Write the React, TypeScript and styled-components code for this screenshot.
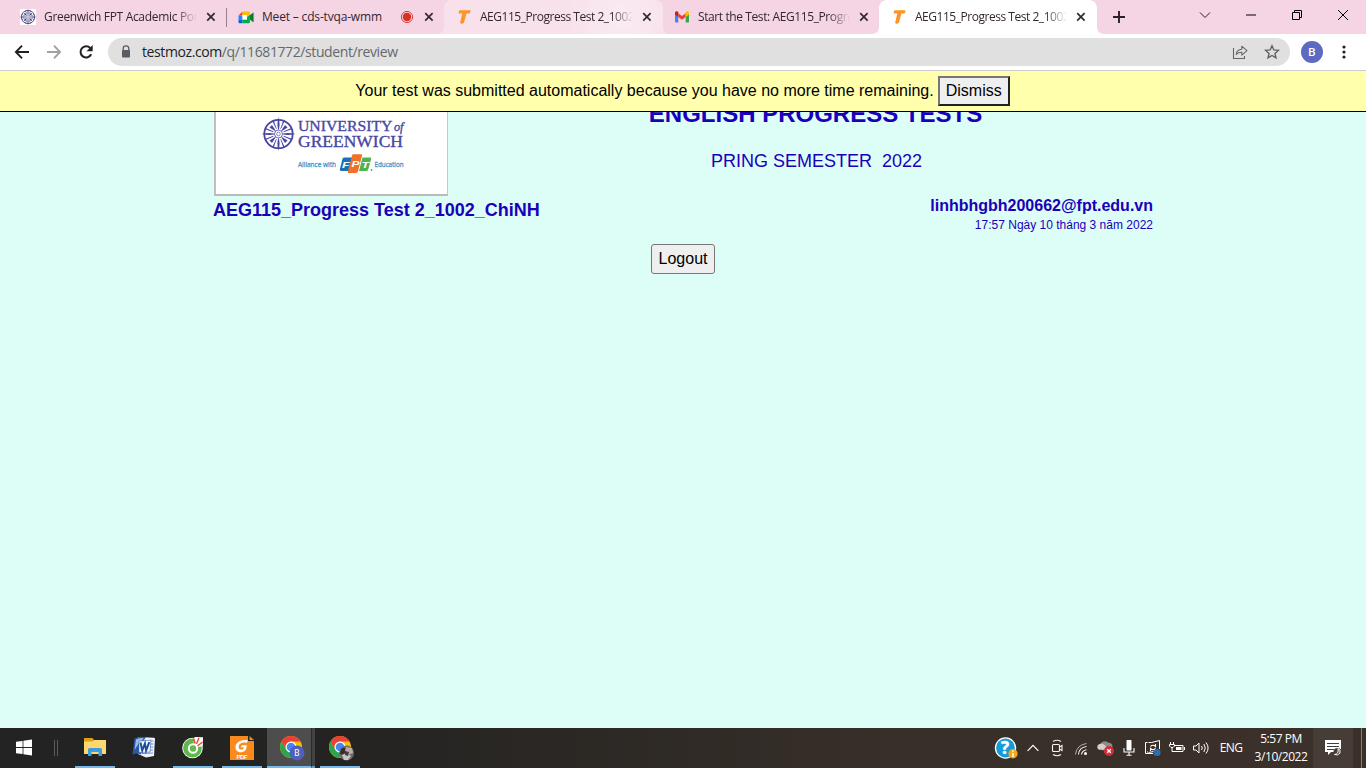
import React from 'react';
import styled, { createGlobalStyle, css } from 'styled-components';

const Global = createGlobalStyle`
  * { box-sizing: border-box; }
  html, body { margin: 0; padding: 0; }
  body { width: 1366px; height: 768px; overflow: hidden; background: #ddfdf7; }
  svg { display: block; flex: none; overflow: visible; }
`;

const ui = css`font-family: 'Open Sans', 'Noto Sans', sans-serif;`;

const Screen = styled.div`
  width: 1366px; height: 768px; display: flex; flex-direction: column; overflow: hidden;
`;

/* Tab strip */
const TabStrip = styled.div`
  ${ui}
  display: flex; height: 34px; background: #f5d4e3; flex: none;
`;
const TabBox = styled.div<{ $w: number; $pad: number; $kind?: 'hover' | 'active' }>`
  position: relative; display: flex; align-items: center; height: 34px; flex: none;
  width: ${p => p.$w}px; padding-left: ${p => p.$pad}px;
  border-radius: 8px 8px 0 0;
  background: ${p => p.$kind === 'active' ? '#fff' : p.$kind === 'hover' ? 'radial-gradient(circle at 178px 17px, #faebf2 0, #f8e1eb 55px)' : 'transparent'};
  ${p => p.$kind && css`
    &::before, &::after {
      content: ''; position: absolute; bottom: 0; width: 6px; height: 6px;
    }
    &::before { left: -6px; background: radial-gradient(circle at 0 0, transparent 5.5px, ${p.$kind === 'active' ? '#fff' : '#f8e1eb'} 6px); }
    &::after { right: -6px; background: radial-gradient(circle at 100% 0, transparent 5.5px, ${p.$kind === 'active' ? '#fff' : '#f8e1eb'} 6px); }
  `}
`;
const TabTitle = styled.span<{ $w: number; $ls: number; $fade?: boolean }>`
  width: ${p => p.$w}px; margin-left: 8px; font-size: 12px; line-height: 18px; height: 18px; color: #33282f;
  letter-spacing: ${p => p.$ls}px; white-space: pre; overflow: hidden; flex: none;
  ${p => p.$fade && css`mask-image: linear-gradient(to right, #000 calc(100% - 22px), transparent);`}
`;
const Recording = styled.span`
  margin-right: 1px;
`;
const CloseSlot = styled.span`
  margin-left: 9px; width: 10px; display: flex;
`;
const TabRule = styled.i`
  width: 1px; height: 19px; margin-top: 8px; background: #95808a; flex: none;
`;
const NewTab = styled.div`
  width: 44px; display: flex; align-items: center; justify-content: center;
`;
const WindowControls = styled.div`
  margin-left: auto; display: flex; height: 29px;
`;
const WindowButton = styled.div`
  width: 46px; display: flex; align-items: center; justify-content: center;
`;

/* Toolbar */
const Toolbar = styled.div`
  ${ui}
  display: flex; align-items: center; height: 37px; padding: 0 0 0 14px; background: #fff;
  border-bottom: 1px solid #cdcdcd; flex: none;
`;
const NavButton = styled.div`
  width: 16px; margin-right: 16px; display: flex; justify-content: center;
`;
const AddressBar = styled.div`
  display: flex; align-items: center; width: 1182px; height: 28px; border-radius: 14px; background: #e0e0e0;
  padding: 0 10px 0 13px; margin-left: -2px; flex: none;
`;
const Url = styled.span`
  margin-left: 11px; flex: 1; font-size: 14px; line-height: 20px; letter-spacing: -0.4px; color: #66686b; white-space: pre;
  b { font-weight: 400; color: #202124; }
`;
const AddressActions = styled.div`
  display: flex; gap: 16px; align-items: center;
`;
const Avatar = styled.div`
  width: 22px; height: 22px; border-radius: 50%; background: #5c6bc0; color: #fff; margin-left: 11px;
  font: 500 11.5px/22px Roboto, sans-serif; text-align: center;
`;
const MenuSlot = styled.div`
  margin-left: 19px;
`;

/* Page */
const Page = styled.main`
  position: relative; height: 657px; background: #ddfdf7; overflow: hidden; flex: none;
  font-family: 'Liberation Sans', Arial, sans-serif; color: #1a00b8;
`;
const Notice = styled.div`
  position: absolute; top: 0; left: 0; width: 100%; height: 41px; background: #ffffac; border-bottom: 1px solid #000;
  color: #000; font-size: 16px; display: flex; justify-content: center; align-items: center; gap: 4px;
  padding-right: 1px; white-space: nowrap;
`;
const Dismiss = styled.button`
  font: 16px 'Liberation Sans', Arial, sans-serif; color: #000; width: 72px; height: 30px; padding: 0;
  background: #efefef; border: 2px solid; border-color: #767676 #212121 #212121 #767676;
`;
const Sheet = styled.div`
  width: 940px; margin: 0 auto; display: flex; flex-direction: column;
`;
const Header = styled.header`
  display: flex; height: 125px; padding-left: 1px;
`;
const Crest = styled.div`
  width: 234px; height: 125px; background: #fff; border: 1px solid #c6c6c6; border-left-width: 2px; border-bottom: 2px solid #bbb;
  border-left-color: #c0c0c0; flex: none; padding: 43px 0 0 45px;
`;
const Headings = styled.div`
  width: 735px; flex: none; padding-top: 29px; text-align: center;
`;
const Heading = styled.h1`
  margin: 0; font-size: 24px; line-height: 28px; font-weight: 700; white-space: nowrap;
`;
const Semester = styled.p`
  margin: 23px 0 0 2px; font-size: 18px; line-height: 21px; white-space: pre;
`;
const TestRow = styled.div`
  display: flex; justify-content: space-between;
`;
const TestName = styled.h2`
  margin: 3px 0 0; font-size: 18px; line-height: 22px; font-weight: 700;
`;
const Student = styled.div`
  text-align: right; font-weight: 700; font-size: 16px; line-height: 18px; padding-top: 1px;
  small { display: block; font-weight: 400; font-size: 12px; line-height: 14px; margin-top: 3px; }
`;
const Logout = styled.button`
  font: 16px 'Liberation Sans', Arial, sans-serif; color: #000; width: 64px; height: 30px; padding: 0;
  background: #efefef; border: 1px solid #767676; border-radius: 3px; align-self: center; margin-top: 12px;
`;

/* Taskbar */
const Taskbar = styled.footer`
  ${ui}
  height: 40px; display: flex; color: #fff; flex: none;
  background: linear-gradient(to right, #222322 0, #242322 340px, #2d2925 620px, #382f29 900px, #3b312a 1366px);
`;
const TaskItem = styled.div<{ $w: number; $gap?: number; $open?: boolean; $active?: boolean }>`
  width: ${p => p.$w}px; margin-left: ${p => p.$gap || 0}px; height: 40px; display: flex; align-items: center; justify-content: center;
  flex: none; border-bottom: 2px solid ${p => p.$open ? '#76b9ed' : 'transparent'};
  background: ${p => p.$active ? '#4c4d4c' : 'transparent'}; background-clip: padding-box;
`;
const StackEdge = styled.div`
  width: 4px; height: 40px; border-bottom: 2px solid #5f9bc9; background: #414241; border-left: 1px solid #2a2a2a; flex: none;
`;
const Tray = styled.div`
  display: flex; align-items: center; margin-left: auto; height: 40px;
`;
const TrayItem = styled.div<{ $w?: number }>`
  width: ${p => p.$w || 24}px; display: flex; justify-content: center; flex: none;
`;
const Language = styled.div`
  width: 36px; font-size: 12px; line-height: 16px; letter-spacing: -0.65px; text-align: center; flex: none;
`;
const Clock = styled.div`
  width: 64px; font-size: 12px; line-height: 18px; text-align: center; white-space: nowrap; letter-spacing: -0.45px; flex: none;
`;
const ActionCenter = styled.div`
  width: 40px; height: 40px; margin-right: 8px; background: #463d37; display: flex; align-items: center; justify-content: center;
`;
const DesktopEdge = styled.div`
  width: 5px; height: 40px; border-left: 1px solid #857e78;
`;

const Close = () => (
  <svg width="10" height="10" viewBox="0 0 10 10"><path d="M1.2 1.2l7.4 7.4M8.6 1.2L1.2 8.6" stroke="#302a2e" strokeWidth="1.7" /></svg>
);

const Compass = ({ size, color }: { size: number; color: string }) => (
  <svg width={size} height={size} viewBox="0 0 34 34" fill="none" stroke={color}>
    <circle cx="17" cy="17" r="14.200" strokeWidth="1.800" />
    <circle cx="17" cy="17" r="4" strokeWidth=".8" />
    <circle cx="17" cy="17" r="1.800" strokeWidth=".6" />
    {Array.from({ length: 16 }, (_, i) => (
      <path key={i} transform={`rotate(${i * 22.5} 17 17)`} fill={color} stroke="none"
        d={i % 4 === 0 ? 'M17 0l.8 4 .3 4-.7 4.500h-.8L15.900 8l.3-4z' : i % 2 === 0 ? 'M15.200 6h3.600l-1.400 6.500h-.8z' : 'M16.300 3h1.400l-.4 8.500h-.6z'} />
    ))}
  </svg>
);

const TestmozIcon = () => (
  <svg width="16" height="16" viewBox="0 0 16 16"><path d="M4.2 1.200h9.600c.7 0 .9.4.7 1l-.4 1.300c-.2.6-.6.9-1.200.9h-2.500L8.300 12.600c-.2.900-.5 1.500-1.400 1.800-1.300.5-3 .3-2.700-.9l2.100-9.100H3.500c-.8 0-1-.4-.8-1l.3-1.300c.2-.6.5-.9 1.200-.9z" fill="#fb9527" /></svg>
);

const MeetIcon = () => (
  <svg width="16" height="16" viewBox="0 0 16 16">
    <path d="M4.500 2.500v4H.5z" fill="#ea4335" /><path d="M.5 6.500h4v4h-4z" fill="#2684fc" /><path d="M.5 10.500h4v3.700H1.600A1.100 1.100 0 0 1 .5 13z" fill="#0066da" />
    <path d="M4.500 2.500h6.200c.8 0 1.200.4 1.200 1.100V8L9 10V6H4.500z" fill="#ffba00" />
    <path d="M4.500 6h4.500v4.700H4.500z" fill="#fff" />
    <path d="M4.500 10.700H9V8l2.900-2v7c0 .8-.4 1.200-1.200 1.200H4.500z" fill="#00ac47" />
    <path d="M11.900 6.200l3-2.400c.4-.3.700-.1.700.3v8.500c0 .5-.3.600-.7.300l-3-2.500z" fill="#00832d" />
  </svg>
);

const GmailIcon = () => (
  <svg width="16" height="16" viewBox="0 0 16 16">
    <path d="M1 4.500l3.300 2.400v6.600H2.100c-.7 0-1.100-.4-1.100-1.100z" fill="#4285f4" /><path d="M11.700 6.900L15 4.500v7.900c0 .7-.4 1.100-1.100 1.100h-2.200z" fill="#34a853" />
    <path d="M4.300 4.200L8 7l3.700-2.800v3.900L8 10.800 4.300 8.100z" fill="#ea4335" />
    <path d="M1 4.100c0-1.600 1.600-2.200 2.700-1.400l.6.500v4.900L1 5.600z" fill="#c5221f" /><path d="M15 4.100c0-1.600-1.600-2.200-2.700-1.400l-.6.500v4.900L15 5.600z" fill="#fbbc04" />
  </svg>
);

const GreenwichLogo = () => (
  <svg width="146" height="62" viewBox="0 0 146 62">
    <g transform="translate(.5 2)"><Compass size={34} color="#4745a0" /></g>
    <g fill="#4846a3" stroke="#4846a3" strokeWidth=".35" fontFamily="'Liberation Serif', serif">
      <text x="37" y="16.300" fontSize="15.500" textLength="94.500" lengthAdjust="spacingAndGlyphs">UNIVERSITY</text>
      <text x="133" y="16.300" fontSize="11.500" fontStyle="italic" textLength="9.500" lengthAdjust="spacingAndGlyphs">of</text>
      <text x="37" y="31.700" fontSize="16.500" textLength="105" lengthAdjust="spacingAndGlyphs">GREENWICH</text>
    </g>
    <g fill="#4097cc" stroke="#4097cc" strokeWidth=".3" fontFamily="'Open Sans', sans-serif" fontSize="7.500">
      <text x="37" y="51.700" textLength="38" lengthAdjust="spacingAndGlyphs">Alliance with</text>
      <text x="113.500" y="51.700" textLength="29" lengthAdjust="spacingAndGlyphs">Education</text>
    </g>
    <g transform="translate(0 1.500)">
      <path d="M83 41h9.500l-3.500 13.500h-8.500c-1.500 0-2-.7-1.600-2l2.400-9.500c.3-1.300.8-2 1.700-2z" fill="#1b71b8" />
      <path d="M101.500 41h7c1.300 0 1.800.6 1.500 1.900l-2.600 9.700c-.3 1.300-1 1.900-2.100 1.900H98z" fill="#50b548" />
      <path d="M92.500 37.700h7.500c1 0 1.300.6 1 1.600l-4 15.500c-.3 1.100-.9 1.700-2 1.700h-7c-1 0-1.400-.6-1.100-1.600l4-15.500c.3-1.100.7-1.700 1.600-1.700z" fill="#f37029" />
      <g fill="#fff" fontFamily="'Liberation Sans', sans-serif" fontSize="9.500" fontWeight="700" fontStyle="italic">
        <text x="81" y="51" textLength="7.500" lengthAdjust="spacingAndGlyphs">F</text>
        <text x="90.500" y="50.500" textLength="8" lengthAdjust="spacingAndGlyphs">P</text>
        <text x="100.500" y="51" textLength="7.500" lengthAdjust="spacingAndGlyphs">T</text>
      </g>
      <circle cx="110.500" cy="53.500" r=".9" fill="#4097cc" />
    </g>
  </svg>
);

const Chrome = ({ dx, children }: { dx: number; children: React.ReactNode }) => (
  <svg width="26" height="26" viewBox={`${-dx} -1 26 26`}>
    <circle cx="12" cy="12" r="11" fill="#fbbd09" />
    <path d="M2.500 6.500A11 11 0 0 0 11.500 23l5-8.300L12 12 7.300 14.600z" fill="#2da44e" />
    <path d="M12 6.600h9.600A11 11 0 0 0 2.500 6.500l4.800 8.100z" fill="#e94235" />
    <circle cx="12" cy="12" r="5.500" fill="#fff" /><circle cx="12" cy="12" r="4.300" fill="#4285f4" />
    {children}
  </svg>
);

const tabs = [
  { w: 226, pad: 20, icon: <Compass size={16} color="#35316f" />, title: 'Greenwich FPT Academic Portal', tw: 153, ls: -0.32, fade: true, white: true },
  { w: 217, pad: 11, icon: <MeetIcon />, title: 'Meet – cds-tvqa-wmm', tw: 138, ls: -0.17, rec: true },
  { w: 219, pad: 12, icon: <TestmozIcon />, title: 'AEG115_Progress Test 2_1002_ChiNH', tw: 153, ls: -0.47, fade: true, kind: 'hover' as const },
  { w: 216, pad: 11, icon: <GmailIcon />, title: 'Start the Test: AEG115_Progress', tw: 152, ls: -0.4, fade: true },
  { w: 218, pad: 12, icon: <TestmozIcon />, title: 'AEG115_Progress Test 2_1002_ChiNH', tw: 152, ls: -0.47, fade: true, kind: 'active' as const },
];

const FaviconPlate = styled.span<{ $white?: boolean }>`
  width: 16px; height: 16px; background: ${p => p.$white ? '#fff' : 'transparent'}; flex: none;
`;

export default function App() {
  return (
    <Screen>
      <Global />
      <TabStrip>
        {tabs.map((t, i) => (
          <React.Fragment key={i}>
            <TabBox $w={t.w} $pad={t.pad} $kind={t.kind}>
              <FaviconPlate $white={t.white}>{t.icon}</FaviconPlate>
              <TabTitle $w={t.tw} $ls={t.ls} $fade={t.fade}>{t.title}</TabTitle>
              {t.rec && (
                <Recording><svg width="14" height="14" viewBox="0 0 14 14"><circle cx="7" cy="7" r="5.600" fill="none" stroke="#d93025" strokeWidth=".9" /><circle cx="7" cy="7" r="4.200" fill="#d93025" /></svg></Recording>
              )}
              <CloseSlot><Close /></CloseSlot>
            </TabBox>
            {i === 0 && <TabRule />}
          </React.Fragment>
        ))}
        <NewTab><svg width="12" height="12" viewBox="0 0 12 12"><path d="M6 0v12M0 6h12" stroke="#2b2226" strokeWidth="1.900" /></svg></NewTab>
        <WindowControls>
          <WindowButton><svg width="12" height="12" viewBox="0 0 12 12"><path d="M1 3.500l5 5 5-5" fill="none" stroke="#222" /></svg></WindowButton>
          <WindowButton><svg width="10" height="10" viewBox="0 0 10 10"><path d="M0 5h10" stroke="#000" /></svg></WindowButton>
          <WindowButton><svg width="10" height="10" viewBox="0 0 10 10"><path d="M.5 2.500h7v7h-7zM2.500 2.500v-2h7v7h-2" fill="none" stroke="#000" /></svg></WindowButton>
          <WindowButton><svg width="10" height="10" viewBox="0 0 10 10"><path d="M0 0l10 10M10 0L0 10" stroke="#000" /></svg></WindowButton>
        </WindowControls>
      </TabStrip>

      <Toolbar>
        <NavButton><svg width="16" height="16" viewBox="0 0 16 16"><path d="M15 8H2.200M8 1.700L1.900 8 8 14.300" fill="none" stroke="#202124" strokeWidth="1.900" /></svg></NavButton>
        <NavButton><svg width="16" height="16" viewBox="0 0 16 16"><path d="M1 8h12.800M8 1.700L14.100 8 8 14.300" fill="none" stroke="#a2a2a4" strokeWidth="1.900" /></svg></NavButton>
        <NavButton><svg width="16" height="16" viewBox="0 0 16 16"><path d="M13.200 10.300a5.600 5.600 0 1 1-1-6.300l1 1" fill="none" stroke="#202124" strokeWidth="2" /><path d="M14.700 1v6.200H8.500z" fill="#202124" /></svg></NavButton>
        <AddressBar>
          <svg width="10" height="14" viewBox="0 0 10 14"><path d="M2.200 5.500V3.600a2.800 2.800 0 0 1 5.600 0v1.900" fill="none" stroke="#5a5d61" strokeWidth="1.300" /><rect x="1" y="5" width="8" height="7.500" rx="1" fill="#5a5d61" /></svg>
          <Url><b>testmoz.com</b>/q/11681772/student/review</Url>
          <AddressActions>
            <svg width="16" height="16" viewBox="0 0 16 16" fill="none" stroke="#65676a" strokeWidth="1.100"><path d="M1.500 4v10.500h11V12" /><path d="M4.200 10.500c.4-3.500 2.500-5 5.600-5.200V2.200L15 6.700l-5.200 4.400V8.300c-2.500 0-4.200.5-5.600 2.200z" strokeLinejoin="round" /></svg>
            <svg width="16" height="16" viewBox="0 0 16 16"><path d="M8 1.800l1.850 4.150 4.500.45-3.400 3 1 4.450L8 11.500l-3.950 2.350 1-4.450-3.400-3 4.500-.45z" fill="none" stroke="#5f6164" strokeWidth="1.400" /></svg>
          </AddressActions>
        </AddressBar>
        <Avatar>B</Avatar>
        <MenuSlot><svg width="4" height="14" viewBox="0 0 4 14" fill="#202124"><circle cx="2" cy="2" r="1.600" /><circle cx="2" cy="7" r="1.600" /><circle cx="2" cy="12" r="1.600" /></svg></MenuSlot>
      </Toolbar>

      <Page>
        <Sheet>
          <Header>
            <Crest><GreenwichLogo /></Crest>
            <Headings>
              <Heading>ENGLISH PROGRESS TESTS</Heading>
              <Semester>PRING SEMESTER  2022</Semester>
            </Headings>
          </Header>
          <TestRow>
            <TestName>AEG115_Progress Test 2_1002_ChiNH</TestName>
            <Student>linhbhgbh200662@fpt.edu.vn<small>17:57 Ngày 10 tháng 3 năm 2022</small></Student>
          </TestRow>
          <Logout>Logout</Logout>
        </Sheet>
        <Notice>
          <span>Your test was submitted automatically because you have no more time remaining.</span>
          <Dismiss>Dismiss</Dismiss>
        </Notice>
      </Page>

      <Taskbar>
        <TaskItem $w={48}><svg width="16" height="16" viewBox="0 -.5 16 16" fill="#fff"><path d="M0 2.300l6.600-.9v6.100H0zM7.400 1.300L16 0v7.500H7.400zM0 8.400h6.600v6.200L0 13.700zM7.400 8.400H16V16l-8.600-1.200z" /></svg></TaskItem>
        <TaskItem $w={16}><svg width="4" height="16" viewBox="0 -1 4 16"><path d="M.5 0v16M3.500 0v16" stroke="#5c5c5c" /></svg></TaskItem>
        <TaskItem $w={40} $gap={11} $open>
          <svg width="22" height="20" viewBox="0 -1 22 20"><path d="M0 0h8.500l1.500 2H22V8H0z" fill="#dca117" /><path d="M0 3.500h9l1-1.500h12v14H0z" fill="#fdd870" /><path d="M4 11.500q0-1.500 1.500-1.500h11q1.500 0 1.500 1.500V18h-3.500v-4h-7v4H4z" fill="#3e9ddd" /></svg>
        </TaskItem>
        <TaskItem $w={40} $gap={9}>
          <svg width="24" height="24" viewBox="0 0 24 24"><path d="M6 2l16 .8 1 .6L22 21l-8 1.500L6 19z" fill="#eef3fb" /><path d="M17 6h4.500M17.500 9h4M17.500 12h4M17 15h4M10 18.500l11-.5" stroke="#6a90d0" /><path d="M2.500 3.500Q8 .5 14 2.300L12 5 9 19.500Q4 17.500.5 20z" fill="#2859a9" /><path d="M4 4.500Q8 2 12 3.500L7 8 2.500 15z" fill="#9dbbe6" /><path d="M7 6l12-.8-1 11.800-11 .5z" fill="#f6f9fd" stroke="#3767b3" strokeWidth=".6" /><path d="M8.500 7.500l1.700 8 2.700-7 1.200 7 3.200-8.300" fill="none" stroke="#1f4b9c" strokeWidth="2" /></svg>
        </TaskItem>
        <TaskItem $w={40} $gap={9} $open>
          <svg width="22" height="22" viewBox="0 -1 22 22"><circle cx="10.500" cy="11" r="10.300" fill="#fff" /><circle cx="10.500" cy="11" r="9.400" fill="#5cb947" /><path d="M11.500 5l1-5 8.500.3-.2 9-5 .7z" fill="#fff" /><path d="M11.500 1.500l1.700 5M17 1l-2.500 6M20.500 5l-5 4" stroke="#e64f35" strokeWidth="1.500" /><circle cx="11" cy="11.500" r="4.200" fill="none" stroke="#fff" strokeWidth="2" /><circle cx="11" cy="11.500" r="2.400" fill="#64b94d" /></svg>
        </TaskItem>
        <TaskItem $w={40} $gap={9} $open>
          <svg width="24" height="24" viewBox="0 -1 24 24"><path d="M0 0h18v5h6v19H0z" fill="#fb8a1e" /><path d="M19.500 0L24 4h-4.500z" fill="#fb8a1e" /><path d="M18 4.500C13 2.800 5.500 5.500 5.500 11.500c0 5 6.500 6.500 10.300 2.500l1.200-4.800h-5l-1.500 2h3.200l-.4 1.700c-2 1.300-4.600.6-4.600-2C8.700 7.500 13 5.800 16.500 7z" fill="#fff" /><text x="6.500" y="22.500" fill="#fff" fontFamily="Liberation Sans, sans-serif" fontWeight="700" fontSize="6" textLength="11">PDF</text></svg>
        </TaskItem>
        <TaskItem $w={44} $gap={5} $open $active>
          <Chrome dx={3}><circle cx="18" cy="18" r="7.500" fill="#515fb9" /><text x="18" y="21.200" textAnchor="middle" fill="#fff" fontFamily="Roboto, sans-serif" fontSize="8.500">B</text></Chrome>
        </TaskItem>
        <StackEdge />
        <TaskItem $w={40} $gap={5} $open>
          <Chrome dx={1}><circle cx="18.500" cy="18" r="7.500" fill="#71686a" /><path d="M13 14q4-3 6 1l-3 5-4-1z" fill="#352e31" /><path d="M18 12l6 1 1 5-5 2-3-4z" fill="#b9aaa7" /><path d="M14 20l4-2 5 3-3 4h-4z" fill="#c9c4c6" /><path d="M17 16l4 1-1 4-3-1z" fill="#473b3e" /></Chrome>
        </TaskItem>
        <Tray>
          <TrayItem $w={30}>
            <svg width="24" height="24" viewBox="-.5 -.5 24 24"><circle cx="11" cy="11.500" r="10.700" fill="#fff" /><circle cx="11" cy="11.500" r="9.400" fill="#159bd9" /><text x="10.500" y="17.800" textAnchor="middle" fill="#fff" stroke="#fff" strokeWidth=".5" fontFamily="Open Sans, sans-serif" fontSize="17" fontWeight="700">?</text><circle cx="18.500" cy="17.300" r="4.700" fill="#f3a81f" /><path d="M18.500 14v1.400M18.500 16.500v4" stroke="#fff" strokeWidth="1.500" /></svg>
          </TrayItem>
          <TrayItem><svg width="12" height="8" viewBox="0 0 12 8"><path d="M.6 6.800L6 1.400l5.400 5.400" fill="none" stroke="#fff" strokeWidth="1.200" /></svg></TrayItem>
          <TrayItem><svg width="12" height="18" viewBox="0 0 12 18" fill="none" stroke="#f4f2f0" strokeWidth="1.100"><rect x="1.500" y="5.500" width="7" height="7" rx="1" /><path d="M8.500 8l2.500-1.500v5L8.500 10M2 2.500q4-2.500 8 0M2 15.500q4 2.500 8 0" /></svg></TrayItem>
          <TrayItem><svg width="14" height="14" viewBox="0 -1 14 14" fill="none"><path d="M1.500 12.500Q2.500 3 12.500 1.500" stroke="#b5aea9" /><path d="M4.500 12.500Q5 5.500 12.500 4.500M7.500 12.500Q8 8.500 12.500 7.700" stroke="#f5f3f1" strokeWidth="1.100" /><circle cx="11.500" cy="11.500" r="1.500" fill="#fff" /></svg></TrayItem>
          <TrayItem><svg width="18" height="16" viewBox="-.5 0 18 16"><path d="M5 10L4.500 3a5 5 0 0 1 7.500-.3A3.500 3.500 0 0 1 15.500 8l-5 3z" fill="#8f8a86" /><path d="M3 9.800a3 3 0 0 1 0-5.800Q6 2.500 8 5l5 4.800z" fill="#d2cfcc" /><circle cx="12.500" cy="11" r="5" fill="#d42d3a" /><path d="M10.700 9.200l3.600 3.600M14.300 9.200l-3.600 3.600" stroke="#fff" strokeWidth="1.300" /></svg></TrayItem>
          <TrayItem><svg width="12" height="16" viewBox="0 0 12 16"><rect x="3.500" y="0" width="5" height="10.500" rx=".8" fill="#fff" /><path d="M1 8v4h10V8M6 12v3M3.500 15.300h5" fill="none" stroke="#fff" strokeWidth="1.100" /></svg></TrayItem>
          <TrayItem><svg width="18" height="18" viewBox="0 0 18 18" fill="none" stroke="#fff"><path d="M9 14.500H1.500v-11h2M4.500 3.500h3l8-2V10M3.500 12.500v1M4.500 13.500l5-1" strokeWidth="1" /><path d="M6.500 7.500q2.500-2.500 5 0V5M11.500 9.500q-2.500 2.500-5 0V12" strokeWidth="1.100" /><circle cx="13" cy="13.500" r="3.600" fill="#2d6cb5" stroke="none" /></svg></TrayItem>
          <TrayItem><svg width="16" height="14" viewBox="0 0 16 14" fill="none" stroke="#fff"><path d="M5.500 4.500H14v6H5.500" /><path d="M7 6h5.500v3H7z" fill="#fff" stroke="none" /><path d="M15.500 6v3M1.500 1v2.500M4.500 1v2.500M.5 3.500h5V5L4 6.500H2L.5 5zM3 6.500v4h3" /></svg></TrayItem>
          <TrayItem><svg width="16" height="14" viewBox="0 0 16 14" fill="none" stroke="#fff"><path d="M.5 5H3l3-3v10L3 9H.5z" /><path d="M8.500 5q1.600 2 0 4M10.800 3q3 4 0 8M13 1.500q4.200 5.500 0 11" /></svg></TrayItem>
          <Language>ENG</Language>
          <Clock>5:57 PM<br />3/10/2022</Clock>
          <ActionCenter><svg width="18" height="18" viewBox="0 0 18 18"><path d="M1 1h16v9l-6 3H7l-3 3v-3H1z" fill="#fff" /><path d="M3 4.500h12M3 7.500h12M3 10.500h7" stroke="#463d37" strokeWidth="1" /><circle cx="13.500" cy="13" r="4" fill="#463d37" /><path d="M14 9.500q3 1 2 4.500-2 3-5.500 1.500Q15 15 14 9.500z" fill="none" stroke="#fff" /></svg></ActionCenter>
          <DesktopEdge />
        </Tray>
      </Taskbar>
    </Screen>
  );
}
